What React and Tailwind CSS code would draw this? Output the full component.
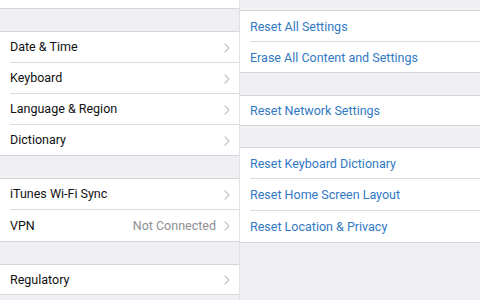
import React from "react";

const font = { fontFamily: "Roboto, 'Noto Sans', sans-serif" };

function Chevron() {
  return (
    <svg width="6" height="10" viewBox="0 0 6 10" className="shrink-0">
      <path d="M1 1 L5 5 L1 9" fill="none" stroke="#c4c4c9" strokeWidth="1.2" strokeLinecap="round" strokeLinejoin="round" />
    </svg>
  );
}

function LeftRow({ label, value, last, h = "h-[31px]" }) {
  return (
    <div className={`${h} pl-[10px] bg-white flex`}>
      <div className={`flex-1 flex items-center pr-[9px] pt-[1px] ${last ? "" : "border-b border-[#dcdce0]"}`}>
        <span className="flex-1 text-[12.5px] text-[#111]">{label}</span>
        {value && <span className="text-[12.5px] text-[#8e8e93] mr-[8px]">{value}</span>}
        <Chevron />
      </div>
    </div>
  );
}

function RightRow({ label, last, h = "h-[31px]" }) {
  return (
    <div className={`${h} pl-[10px] bg-white flex`}>
      <div className={`flex-1 flex items-center pt-[2px] ${last ? "" : "border-b border-[#dcdce0]"}`}>
        <span className="text-[12.5px] text-[#3179c3]">{label}</span>
      </div>
    </div>
  );
}

function Group({ children }) {
  return <div className="border-y border-[#d6d6da]">{children}</div>;
}

export default function App() {
  return (
    <div className="w-[480px] h-[300px] overflow-hidden flex bg-[#efeff4]" style={font}>
      <div className="w-[240px] flex flex-col border-r border-[#e2e2e6]">
        <div className="h-[9px] bg-white border-b border-[#d6d6da]" />
        <div className="h-[22px]" />
        <Group>
          <LeftRow label="Date & Time" />
          <LeftRow label="Keyboard" />
          <LeftRow label="Language & Region" />
          <LeftRow label="Dictionary" last h="h-[30px]" />
        </Group>
        <div className="h-[22px]" />
        <Group>
          <LeftRow label="iTunes Wi-Fi Sync" />
          <LeftRow label="VPN" value="Not Connected" last />
        </Group>
        <div className="h-[22px]" />
        <Group>
          <LeftRow label="Regulatory" last h="h-[29px]" />
        </Group>
      </div>
      <div className="w-[240px] flex flex-col">
        <div className="h-[10px]" />
        <Group>
          <RightRow label="Reset All Settings" />
          <RightRow label="Erase All Content and Settings" last h="h-[30px]" />
        </Group>
        <div className="h-[22px]" />
        <Group>
          <RightRow label="Reset Network Settings" last h="h-[29px]" />
        </Group>
        <div className="h-[21px]" />
        <Group>
          <RightRow label="Reset Keyboard Dictionary" />
          <RightRow label="Reset Home Screen Layout" h="h-[32px]" />
          <RightRow label="Reset Location & Privacy" last h="h-[31px]" />
        </Group>
      </div>
    </div>
  );
}
